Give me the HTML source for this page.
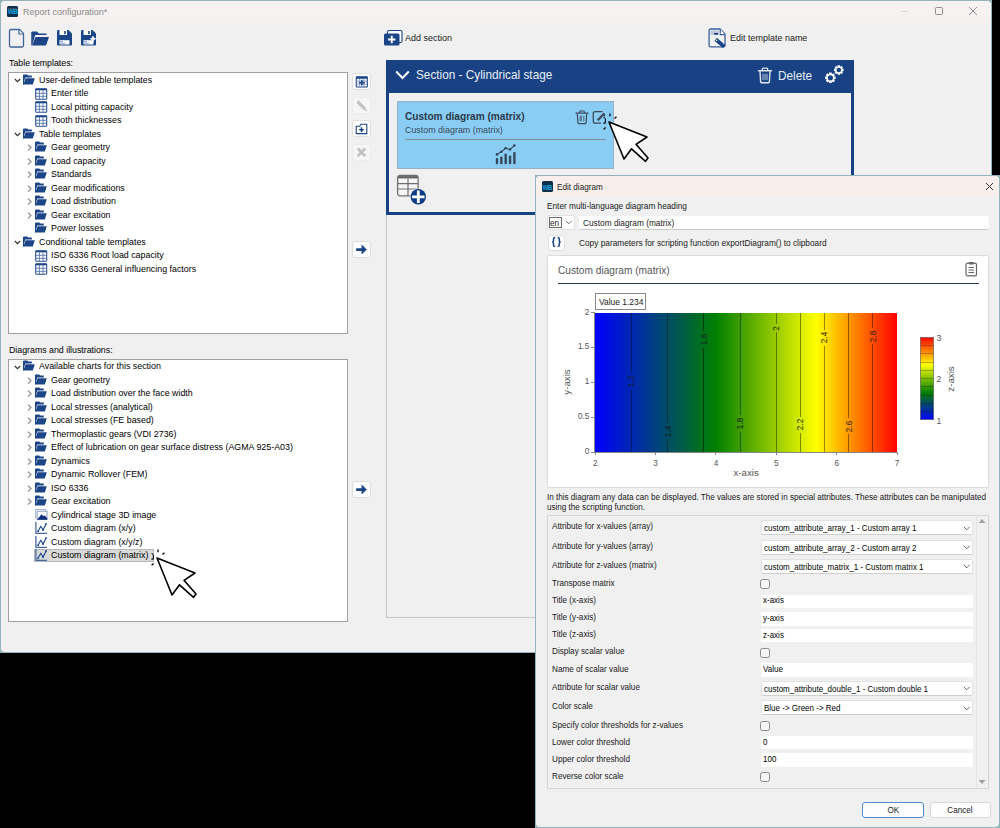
<!DOCTYPE html>
<html><head><meta charset="utf-8"><title>Report configuration</title>
<style>
html,body{margin:0;padding:0;width:1000px;height:828px;overflow:hidden;background:#000;}
.r{position:absolute;display:block;}
.t{position:absolute;white-space:nowrap;font-family:"Liberation Sans", sans-serif;line-height:1;}
</style></head><body>
<div class="r" style="left:0;top:0;width:992px;height:653px;background:#93b4b9"></div>
<div class="r" style="left:1px;top:1px;width:990px;height:651px;background:#f0f0f0;border-radius:4px;overflow:hidden"></div>
<div class="r" style="left:1px;top:1px;width:990px;height:22px;background:#f5f2f1;border-radius:4px 4px 0 0"></div>
<div class="r" style="left:7px;top:5.5px;width:11px;height:11px;background:#0f2f48;border-radius:1.5px"></div>
<div class="r" style="left:8px;top:7.5px;width:9px;height:1px;background:#3a4a5a"></div>
<div class="t " style="left:7.8px;top:8.84px;font-size:6.80px;color:#1aa3e0;font-weight:bold;letter-spacing:-0.9px">WB</div>
<div class="t " style="left:23px;top:7.12px;font-size:9.90px;color:#8a8a8a;transform:scaleX(0.9091);transform-origin:0 0;">Report configuration*</div>
<div class="r" style="left:901px;top:11px;width:7px;height:1px;background:#d8d8d8"></div>
<div class="r" style="left:935px;top:7px;width:7.5px;height:7.5px;border:1px solid #8c8c8c;box-sizing:border-box;border-radius:1.5px"></div>
<svg class="r" style="left:968px;top:6px;" width="10" height="10" viewBox="0 0 10 10"><path d="M1 1L9 9M9 1L1 9" stroke="#858585" stroke-width="0.9"/></svg>
<svg class="r" style="left:8px;top:28px;" width="17" height="20" viewBox="0 0 17 20"><path d="M1.5 3Q1.5 1.5 3 1.5H11.5L15.5 5.5V17.5Q15.5 19 14 19H3Q1.5 19 1.5 17.5Z" fill="#f0f0f0" stroke="#40649e" stroke-width="1.3" stroke-linejoin="round"/><path d="M11 1.8V6H15.2" fill="#fff" stroke="#40649e" stroke-width="1.2"/></svg>
<svg class="r" style="left:31px;top:30px;" width="19" height="17" viewBox="0 0 19 17"><path d="M1 1.5H6L7.8 3.5H15.5V5H4.2L1.2 15.5Z" fill="#1c4587"/><path d="M4.5 7H18L15 15.5H1.2Z" fill="#1c4587"/><path d="M0.8 2V15.5" stroke="#1c4587" stroke-width="1.1"/></svg>
<svg class="r" style="left:56px;top:29px;" width="17" height="18" viewBox="0 0 17 18"><path d="M1 2.2Q1 1 2.2 1H12.5L16 4.5V15.3Q16 16.5 14.8 16.5H2.2Q1 16.5 1 15.3Z" fill="#1c4587"/><rect x="3.5" y="1" width="7.5" height="5" fill="#fff"/><rect x="8.2" y="2" width="1.6" height="3.2" fill="#1c4587"/><rect x="3.5" y="11.2" width="10" height="4.3" fill="#fff"/><rect x="4.2" y="12.3" width="2.6" height="0.9" fill="#5a7ab0"/><rect x="4.2" y="13.8" width="5" height="0.9" fill="#8aa0c8"/></svg>
<svg class="r" style="left:80px;top:29px;" width="17" height="18" viewBox="0 0 17 18"><path d="M1 2.2Q1 1 2.2 1H12.5L16 4.5V15.3Q16 16.5 14.8 16.5H2.2Q1 16.5 1 15.3Z" fill="#1c4587"/><rect x="3.5" y="1" width="7.5" height="5" fill="#fff"/><rect x="8.2" y="2" width="1.6" height="3.2" fill="#1c4587"/><rect x="3.5" y="11.2" width="10" height="4.3" fill="#fff"/><rect x="4.2" y="12.3" width="2.6" height="0.9" fill="#5a7ab0"/><rect x="4.2" y="13.8" width="5" height="0.9" fill="#8aa0c8"/><path d="M13 7.2Q13.4 9.4 15.6 9.8Q13.4 10.2 13 12.4Q12.6 10.2 10.4 9.8Q12.6 9.4 13 7.2Z" fill="#fff" stroke="#fff" stroke-width="0.8"/></svg>
<div class="t " style="left:9px;top:57.81px;font-size:9.68px;color:#000;transform:scaleX(0.9091);transform-origin:0 0;">Table templates:</div>
<div class="t " style="left:9px;top:344.91px;font-size:9.68px;color:#000;transform:scaleX(0.9091);transform-origin:0 0;">Diagrams and illustrations:</div>
<div class="r" style="left:8px;top:72px;width:340px;height:262px;background:#fff;border:1px solid #a0a0a0;box-sizing:border-box"></div>
<div class="r" style="left:8px;top:359px;width:340px;height:263px;background:#fff;border:1px solid #a0a0a0;box-sizing:border-box"></div>
<div class="r" style="left:34px;top:549px;width:120px;height:13px;background:#d9d9d9;border:1px solid #b8b8b8;box-sizing:border-box"></div>
<svg class="r" style="left:13.5px;top:78.0px;" width="7" height="5" viewBox="0 0 7 5"><path d="M0.8 1L3.5 3.6L6.2 1" fill="none" stroke="#333" stroke-width="1.2"/></svg>
<svg class="r" style="left:23px;top:73.7px;" width="12" height="12" viewBox="0 0 12 12"><path d="M0.5 0.5H4.2L5.2 1.6H8.8V3.4H2.2L0.5 9.8Z" fill="#1c4587"/><path d="M2.6 4.2H11.8L9.8 10.6H0.4Z" fill="#1c4587"/><path d="M0.5 1V10.5" stroke="#1c4587" stroke-width="1"/></svg>
<div class="t " style="left:39px;top:74.76px;font-size:9.74px;color:#000;transform:scaleX(0.9091);transform-origin:0 0;">User-defined table templates</div>
<svg class="r" style="left:35px;top:87.5px;" width="13" height="12" viewBox="0 0 13 12"><rect x="0.7" y="0.7" width="11" height="10.6" fill="#fff" stroke="#2a5094" stroke-width="1.1" rx="0.8"/><rect x="0.7" y="0.7" width="11" height="1.6" fill="#1c4587"/><path d="M0.7 5.3H11.7M0.7 8.3H11.7M4.4 2V11.3M8 2V11.3" stroke="#5574aa" stroke-width="0.9"/></svg>
<div class="t " style="left:51px;top:88.26px;font-size:9.74px;color:#000;transform:scaleX(0.9091);transform-origin:0 0;">Enter title</div>
<svg class="r" style="left:35px;top:101.0px;" width="13" height="12" viewBox="0 0 13 12"><rect x="0.7" y="0.7" width="11" height="10.6" fill="#fff" stroke="#2a5094" stroke-width="1.1" rx="0.8"/><rect x="0.7" y="0.7" width="11" height="1.6" fill="#1c4587"/><path d="M0.7 5.3H11.7M0.7 8.3H11.7M4.4 2V11.3M8 2V11.3" stroke="#5574aa" stroke-width="0.9"/></svg>
<div class="t " style="left:51px;top:101.76px;font-size:9.74px;color:#000;transform:scaleX(0.9091);transform-origin:0 0;">Local pitting capacity</div>
<svg class="r" style="left:35px;top:114.5px;" width="13" height="12" viewBox="0 0 13 12"><rect x="0.7" y="0.7" width="11" height="10.6" fill="#fff" stroke="#2a5094" stroke-width="1.1" rx="0.8"/><rect x="0.7" y="0.7" width="11" height="1.6" fill="#1c4587"/><path d="M0.7 5.3H11.7M0.7 8.3H11.7M4.4 2V11.3M8 2V11.3" stroke="#5574aa" stroke-width="0.9"/></svg>
<div class="t " style="left:51px;top:115.26px;font-size:9.74px;color:#000;transform:scaleX(0.9091);transform-origin:0 0;">Tooth thicknesses</div>
<svg class="r" style="left:13.5px;top:132.0px;" width="7" height="5" viewBox="0 0 7 5"><path d="M0.8 1L3.5 3.6L6.2 1" fill="none" stroke="#333" stroke-width="1.2"/></svg>
<svg class="r" style="left:23px;top:127.7px;" width="12" height="12" viewBox="0 0 12 12"><path d="M0.5 0.5H4.2L5.2 1.6H8.8V3.4H2.2L0.5 9.8Z" fill="#1c4587"/><path d="M2.6 4.2H11.8L9.8 10.6H0.4Z" fill="#1c4587"/><path d="M0.5 1V10.5" stroke="#1c4587" stroke-width="1"/></svg>
<div class="t " style="left:39px;top:128.76px;font-size:9.74px;color:#000;transform:scaleX(0.9091);transform-origin:0 0;">Table templates</div>
<svg class="r" style="left:26.5px;top:144.3px;" width="5" height="8" viewBox="0 0 5 8"><path d="M1 0.6L4 3.6L1 6.6" fill="none" stroke="#8c8c8c" stroke-width="1.2"/></svg>
<svg class="r" style="left:35px;top:141.2px;" width="12" height="12" viewBox="0 0 12 12"><path d="M0.5 0.5H4.2L5.2 1.6H8.8V3.4H2.2L0.5 9.8Z" fill="#1c4587"/><path d="M2.6 4.2H11.8L9.8 10.6H0.4Z" fill="#1c4587"/><path d="M0.5 1V10.5" stroke="#1c4587" stroke-width="1"/></svg>
<div class="t " style="left:51px;top:142.26px;font-size:9.74px;color:#000;transform:scaleX(0.9091);transform-origin:0 0;">Gear geometry</div>
<svg class="r" style="left:26.5px;top:157.8px;" width="5" height="8" viewBox="0 0 5 8"><path d="M1 0.6L4 3.6L1 6.6" fill="none" stroke="#8c8c8c" stroke-width="1.2"/></svg>
<svg class="r" style="left:35px;top:154.7px;" width="12" height="12" viewBox="0 0 12 12"><path d="M0.5 0.5H4.2L5.2 1.6H8.8V3.4H2.2L0.5 9.8Z" fill="#1c4587"/><path d="M2.6 4.2H11.8L9.8 10.6H0.4Z" fill="#1c4587"/><path d="M0.5 1V10.5" stroke="#1c4587" stroke-width="1"/></svg>
<div class="t " style="left:51px;top:155.76px;font-size:9.74px;color:#000;transform:scaleX(0.9091);transform-origin:0 0;">Load capacity</div>
<svg class="r" style="left:26.5px;top:171.3px;" width="5" height="8" viewBox="0 0 5 8"><path d="M1 0.6L4 3.6L1 6.6" fill="none" stroke="#8c8c8c" stroke-width="1.2"/></svg>
<svg class="r" style="left:35px;top:168.2px;" width="12" height="12" viewBox="0 0 12 12"><path d="M0.5 0.5H4.2L5.2 1.6H8.8V3.4H2.2L0.5 9.8Z" fill="#1c4587"/><path d="M2.6 4.2H11.8L9.8 10.6H0.4Z" fill="#1c4587"/><path d="M0.5 1V10.5" stroke="#1c4587" stroke-width="1"/></svg>
<div class="t " style="left:51px;top:169.26px;font-size:9.74px;color:#000;transform:scaleX(0.9091);transform-origin:0 0;">Standards</div>
<svg class="r" style="left:26.5px;top:184.8px;" width="5" height="8" viewBox="0 0 5 8"><path d="M1 0.6L4 3.6L1 6.6" fill="none" stroke="#8c8c8c" stroke-width="1.2"/></svg>
<svg class="r" style="left:35px;top:181.7px;" width="12" height="12" viewBox="0 0 12 12"><path d="M0.5 0.5H4.2L5.2 1.6H8.8V3.4H2.2L0.5 9.8Z" fill="#1c4587"/><path d="M2.6 4.2H11.8L9.8 10.6H0.4Z" fill="#1c4587"/><path d="M0.5 1V10.5" stroke="#1c4587" stroke-width="1"/></svg>
<div class="t " style="left:51px;top:182.76px;font-size:9.74px;color:#000;transform:scaleX(0.9091);transform-origin:0 0;">Gear modifications</div>
<svg class="r" style="left:26.5px;top:198.3px;" width="5" height="8" viewBox="0 0 5 8"><path d="M1 0.6L4 3.6L1 6.6" fill="none" stroke="#8c8c8c" stroke-width="1.2"/></svg>
<svg class="r" style="left:35px;top:195.2px;" width="12" height="12" viewBox="0 0 12 12"><path d="M0.5 0.5H4.2L5.2 1.6H8.8V3.4H2.2L0.5 9.8Z" fill="#1c4587"/><path d="M2.6 4.2H11.8L9.8 10.6H0.4Z" fill="#1c4587"/><path d="M0.5 1V10.5" stroke="#1c4587" stroke-width="1"/></svg>
<div class="t " style="left:51px;top:196.26px;font-size:9.74px;color:#000;transform:scaleX(0.9091);transform-origin:0 0;">Load distribution</div>
<svg class="r" style="left:26.5px;top:211.8px;" width="5" height="8" viewBox="0 0 5 8"><path d="M1 0.6L4 3.6L1 6.6" fill="none" stroke="#8c8c8c" stroke-width="1.2"/></svg>
<svg class="r" style="left:35px;top:208.7px;" width="12" height="12" viewBox="0 0 12 12"><path d="M0.5 0.5H4.2L5.2 1.6H8.8V3.4H2.2L0.5 9.8Z" fill="#1c4587"/><path d="M2.6 4.2H11.8L9.8 10.6H0.4Z" fill="#1c4587"/><path d="M0.5 1V10.5" stroke="#1c4587" stroke-width="1"/></svg>
<div class="t " style="left:51px;top:209.76px;font-size:9.74px;color:#000;transform:scaleX(0.9091);transform-origin:0 0;">Gear excitation</div>
<svg class="r" style="left:35px;top:222.2px;" width="12" height="12" viewBox="0 0 12 12"><path d="M0.5 0.5H4.2L5.2 1.6H8.8V3.4H2.2L0.5 9.8Z" fill="#1c4587"/><path d="M2.6 4.2H11.8L9.8 10.6H0.4Z" fill="#1c4587"/><path d="M0.5 1V10.5" stroke="#1c4587" stroke-width="1"/></svg>
<div class="t " style="left:51px;top:223.26px;font-size:9.74px;color:#000;transform:scaleX(0.9091);transform-origin:0 0;">Power losses</div>
<svg class="r" style="left:13.5px;top:240.0px;" width="7" height="5" viewBox="0 0 7 5"><path d="M0.8 1L3.5 3.6L6.2 1" fill="none" stroke="#333" stroke-width="1.2"/></svg>
<svg class="r" style="left:23px;top:235.7px;" width="12" height="12" viewBox="0 0 12 12"><path d="M0.5 0.5H4.2L5.2 1.6H8.8V3.4H2.2L0.5 9.8Z" fill="#1c4587"/><path d="M2.6 4.2H11.8L9.8 10.6H0.4Z" fill="#1c4587"/><path d="M0.5 1V10.5" stroke="#1c4587" stroke-width="1"/></svg>
<div class="t " style="left:39px;top:236.76px;font-size:9.74px;color:#000;transform:scaleX(0.9091);transform-origin:0 0;">Conditional table templates</div>
<svg class="r" style="left:35px;top:249.5px;" width="13" height="12" viewBox="0 0 13 12"><rect x="0.7" y="0.7" width="11" height="10.6" fill="#fff" stroke="#2a5094" stroke-width="1.1" rx="0.8"/><rect x="0.7" y="0.7" width="11" height="1.6" fill="#1c4587"/><path d="M0.7 5.3H11.7M0.7 8.3H11.7M4.4 2V11.3M8 2V11.3" stroke="#5574aa" stroke-width="0.9"/></svg>
<div class="t " style="left:51px;top:250.26px;font-size:9.74px;color:#000;transform:scaleX(0.9091);transform-origin:0 0;">ISO 6336 Root load capacity</div>
<svg class="r" style="left:35px;top:263.0px;" width="13" height="12" viewBox="0 0 13 12"><rect x="0.7" y="0.7" width="11" height="10.6" fill="#fff" stroke="#2a5094" stroke-width="1.1" rx="0.8"/><rect x="0.7" y="0.7" width="11" height="1.6" fill="#1c4587"/><path d="M0.7 5.3H11.7M0.7 8.3H11.7M4.4 2V11.3M8 2V11.3" stroke="#5574aa" stroke-width="0.9"/></svg>
<div class="t " style="left:51px;top:263.76px;font-size:9.74px;color:#000;transform:scaleX(0.9091);transform-origin:0 0;">ISO 6336 General influencing factors</div>
<svg class="r" style="left:13.5px;top:364.5px;" width="7" height="5" viewBox="0 0 7 5"><path d="M0.8 1L3.5 3.6L6.2 1" fill="none" stroke="#333" stroke-width="1.2"/></svg>
<svg class="r" style="left:23px;top:360.2px;" width="12" height="12" viewBox="0 0 12 12"><path d="M0.5 0.5H4.2L5.2 1.6H8.8V3.4H2.2L0.5 9.8Z" fill="#1c4587"/><path d="M2.6 4.2H11.8L9.8 10.6H0.4Z" fill="#1c4587"/><path d="M0.5 1V10.5" stroke="#1c4587" stroke-width="1"/></svg>
<div class="t " style="left:39px;top:361.26px;font-size:9.74px;color:#000;transform:scaleX(0.9091);transform-origin:0 0;">Available charts for this section</div>
<svg class="r" style="left:26.5px;top:376.8px;" width="5" height="8" viewBox="0 0 5 8"><path d="M1 0.6L4 3.6L1 6.6" fill="none" stroke="#8c8c8c" stroke-width="1.2"/></svg>
<svg class="r" style="left:35px;top:373.7px;" width="12" height="12" viewBox="0 0 12 12"><path d="M0.5 0.5H4.2L5.2 1.6H8.8V3.4H2.2L0.5 9.8Z" fill="#1c4587"/><path d="M2.6 4.2H11.8L9.8 10.6H0.4Z" fill="#1c4587"/><path d="M0.5 1V10.5" stroke="#1c4587" stroke-width="1"/></svg>
<div class="t " style="left:51px;top:374.76px;font-size:9.74px;color:#000;transform:scaleX(0.9091);transform-origin:0 0;">Gear geometry</div>
<svg class="r" style="left:26.5px;top:390.3px;" width="5" height="8" viewBox="0 0 5 8"><path d="M1 0.6L4 3.6L1 6.6" fill="none" stroke="#8c8c8c" stroke-width="1.2"/></svg>
<svg class="r" style="left:35px;top:387.2px;" width="12" height="12" viewBox="0 0 12 12"><path d="M0.5 0.5H4.2L5.2 1.6H8.8V3.4H2.2L0.5 9.8Z" fill="#1c4587"/><path d="M2.6 4.2H11.8L9.8 10.6H0.4Z" fill="#1c4587"/><path d="M0.5 1V10.5" stroke="#1c4587" stroke-width="1"/></svg>
<div class="t " style="left:51px;top:388.26px;font-size:9.74px;color:#000;transform:scaleX(0.9091);transform-origin:0 0;">Load distribution over the face width</div>
<svg class="r" style="left:26.5px;top:403.8px;" width="5" height="8" viewBox="0 0 5 8"><path d="M1 0.6L4 3.6L1 6.6" fill="none" stroke="#8c8c8c" stroke-width="1.2"/></svg>
<svg class="r" style="left:35px;top:400.7px;" width="12" height="12" viewBox="0 0 12 12"><path d="M0.5 0.5H4.2L5.2 1.6H8.8V3.4H2.2L0.5 9.8Z" fill="#1c4587"/><path d="M2.6 4.2H11.8L9.8 10.6H0.4Z" fill="#1c4587"/><path d="M0.5 1V10.5" stroke="#1c4587" stroke-width="1"/></svg>
<div class="t " style="left:51px;top:401.76px;font-size:9.74px;color:#000;transform:scaleX(0.9091);transform-origin:0 0;">Local stresses (analytical)</div>
<svg class="r" style="left:26.5px;top:417.3px;" width="5" height="8" viewBox="0 0 5 8"><path d="M1 0.6L4 3.6L1 6.6" fill="none" stroke="#8c8c8c" stroke-width="1.2"/></svg>
<svg class="r" style="left:35px;top:414.2px;" width="12" height="12" viewBox="0 0 12 12"><path d="M0.5 0.5H4.2L5.2 1.6H8.8V3.4H2.2L0.5 9.8Z" fill="#1c4587"/><path d="M2.6 4.2H11.8L9.8 10.6H0.4Z" fill="#1c4587"/><path d="M0.5 1V10.5" stroke="#1c4587" stroke-width="1"/></svg>
<div class="t " style="left:51px;top:415.26px;font-size:9.74px;color:#000;transform:scaleX(0.9091);transform-origin:0 0;">Local stresses (FE based)</div>
<svg class="r" style="left:26.5px;top:430.8px;" width="5" height="8" viewBox="0 0 5 8"><path d="M1 0.6L4 3.6L1 6.6" fill="none" stroke="#8c8c8c" stroke-width="1.2"/></svg>
<svg class="r" style="left:35px;top:427.7px;" width="12" height="12" viewBox="0 0 12 12"><path d="M0.5 0.5H4.2L5.2 1.6H8.8V3.4H2.2L0.5 9.8Z" fill="#1c4587"/><path d="M2.6 4.2H11.8L9.8 10.6H0.4Z" fill="#1c4587"/><path d="M0.5 1V10.5" stroke="#1c4587" stroke-width="1"/></svg>
<div class="t " style="left:51px;top:428.76px;font-size:9.74px;color:#000;transform:scaleX(0.9091);transform-origin:0 0;">Thermoplastic gears (VDI 2736)</div>
<svg class="r" style="left:26.5px;top:444.3px;" width="5" height="8" viewBox="0 0 5 8"><path d="M1 0.6L4 3.6L1 6.6" fill="none" stroke="#8c8c8c" stroke-width="1.2"/></svg>
<svg class="r" style="left:35px;top:441.2px;" width="12" height="12" viewBox="0 0 12 12"><path d="M0.5 0.5H4.2L5.2 1.6H8.8V3.4H2.2L0.5 9.8Z" fill="#1c4587"/><path d="M2.6 4.2H11.8L9.8 10.6H0.4Z" fill="#1c4587"/><path d="M0.5 1V10.5" stroke="#1c4587" stroke-width="1"/></svg>
<div class="t " style="left:51px;top:442.26px;font-size:9.74px;color:#000;transform:scaleX(0.9091);transform-origin:0 0;">Effect of lubrication on gear surface distress (AGMA 925-A03)</div>
<svg class="r" style="left:26.5px;top:457.8px;" width="5" height="8" viewBox="0 0 5 8"><path d="M1 0.6L4 3.6L1 6.6" fill="none" stroke="#8c8c8c" stroke-width="1.2"/></svg>
<svg class="r" style="left:35px;top:454.7px;" width="12" height="12" viewBox="0 0 12 12"><path d="M0.5 0.5H4.2L5.2 1.6H8.8V3.4H2.2L0.5 9.8Z" fill="#1c4587"/><path d="M2.6 4.2H11.8L9.8 10.6H0.4Z" fill="#1c4587"/><path d="M0.5 1V10.5" stroke="#1c4587" stroke-width="1"/></svg>
<div class="t " style="left:51px;top:455.76px;font-size:9.74px;color:#000;transform:scaleX(0.9091);transform-origin:0 0;">Dynamics</div>
<svg class="r" style="left:26.5px;top:471.3px;" width="5" height="8" viewBox="0 0 5 8"><path d="M1 0.6L4 3.6L1 6.6" fill="none" stroke="#8c8c8c" stroke-width="1.2"/></svg>
<svg class="r" style="left:35px;top:468.2px;" width="12" height="12" viewBox="0 0 12 12"><path d="M0.5 0.5H4.2L5.2 1.6H8.8V3.4H2.2L0.5 9.8Z" fill="#1c4587"/><path d="M2.6 4.2H11.8L9.8 10.6H0.4Z" fill="#1c4587"/><path d="M0.5 1V10.5" stroke="#1c4587" stroke-width="1"/></svg>
<div class="t " style="left:51px;top:469.26px;font-size:9.74px;color:#000;transform:scaleX(0.9091);transform-origin:0 0;">Dynamic Rollover (FEM)</div>
<svg class="r" style="left:26.5px;top:484.8px;" width="5" height="8" viewBox="0 0 5 8"><path d="M1 0.6L4 3.6L1 6.6" fill="none" stroke="#8c8c8c" stroke-width="1.2"/></svg>
<svg class="r" style="left:35px;top:481.7px;" width="12" height="12" viewBox="0 0 12 12"><path d="M0.5 0.5H4.2L5.2 1.6H8.8V3.4H2.2L0.5 9.8Z" fill="#1c4587"/><path d="M2.6 4.2H11.8L9.8 10.6H0.4Z" fill="#1c4587"/><path d="M0.5 1V10.5" stroke="#1c4587" stroke-width="1"/></svg>
<div class="t " style="left:51px;top:482.76px;font-size:9.74px;color:#000;transform:scaleX(0.9091);transform-origin:0 0;">ISO 6336</div>
<svg class="r" style="left:26.5px;top:498.3px;" width="5" height="8" viewBox="0 0 5 8"><path d="M1 0.6L4 3.6L1 6.6" fill="none" stroke="#8c8c8c" stroke-width="1.2"/></svg>
<svg class="r" style="left:35px;top:495.2px;" width="12" height="12" viewBox="0 0 12 12"><path d="M0.5 0.5H4.2L5.2 1.6H8.8V3.4H2.2L0.5 9.8Z" fill="#1c4587"/><path d="M2.6 4.2H11.8L9.8 10.6H0.4Z" fill="#1c4587"/><path d="M0.5 1V10.5" stroke="#1c4587" stroke-width="1"/></svg>
<div class="t " style="left:51px;top:496.26px;font-size:9.74px;color:#000;transform:scaleX(0.9091);transform-origin:0 0;">Gear excitation</div>
<svg class="r" style="left:35px;top:508.8px;" width="13" height="11" viewBox="0 0 13 11"><rect x="0.5" y="0.5" width="10.2" height="8.2" fill="none" stroke="#a9b6cc" stroke-width="1"/><rect x="2.2" y="2.2" width="9.8" height="8.4" fill="#fff" stroke="#8a9cc0" stroke-width="1"/><path d="M2 10.8L6.5 5.2L8.3 7.2L9.4 6.2L12.2 9.2V10.8Z" fill="#0f2f78"/></svg>
<div class="t " style="left:51px;top:509.76px;font-size:9.74px;color:#000;transform:scaleX(0.9091);transform-origin:0 0;">Cylindrical stage 3D image</div>
<svg class="r" style="left:35px;top:522.0px;" width="12" height="12" viewBox="0 0 12 12"><path d="M0.9 0V11.3H12" fill="none" stroke="#4a6aa4" stroke-width="1.3"/><path d="M3 9.3L5.8 4.3L8 8L11 2.2" fill="none" stroke="#1c4587" stroke-width="1.15"/><circle cx="3" cy="9.3" r="0.9" fill="#1c4587"/><circle cx="8" cy="8" r="0.9" fill="#1c4587"/><circle cx="11" cy="2" r="0.9" fill="#1c4587"/></svg>
<div class="t " style="left:51px;top:523.26px;font-size:9.74px;color:#000;transform:scaleX(0.9091);transform-origin:0 0;">Custom diagram (x/y)</div>
<svg class="r" style="left:35px;top:535.5px;" width="12" height="12" viewBox="0 0 12 12"><path d="M0.9 0V11.3H12" fill="none" stroke="#4a6aa4" stroke-width="1.3"/><path d="M3 9.3L5.8 4.3L8 8L11 2.2" fill="none" stroke="#1c4587" stroke-width="1.15"/><circle cx="3" cy="9.3" r="0.9" fill="#1c4587"/><circle cx="8" cy="8" r="0.9" fill="#1c4587"/><circle cx="11" cy="2" r="0.9" fill="#1c4587"/></svg>
<div class="t " style="left:51px;top:536.76px;font-size:9.74px;color:#000;transform:scaleX(0.9091);transform-origin:0 0;">Custom diagram (x/y/z)</div>
<svg class="r" style="left:35px;top:549.0px;" width="12" height="12" viewBox="0 0 12 12"><path d="M0.9 0V11.3H12" fill="none" stroke="#4a6aa4" stroke-width="1.3"/><path d="M3 9.3L5.8 4.3L8 8L11 2.2" fill="none" stroke="#1c4587" stroke-width="1.15"/><circle cx="3" cy="9.3" r="0.9" fill="#1c4587"/><circle cx="8" cy="8" r="0.9" fill="#1c4587"/><circle cx="11" cy="2" r="0.9" fill="#1c4587"/></svg>
<div class="t " style="left:51px;top:550.26px;font-size:9.74px;color:#000;transform:scaleX(0.9091);transform-origin:0 0;">Custom diagram (matrix)</div>
<div class="r" style="left:352px;top:73px;width:19px;height:17px;background:#fdfdfd;border:1px solid #e0e0e0;box-sizing:border-box;border-radius:3px"></div>
<svg class="r" style="left:352px;top:73px;" width="19" height="17" viewBox="0 0 19 17"><rect x="4.3" y="3.8" width="11" height="10.2" rx="0.6" fill="#fff" stroke="#1c4587" stroke-width="1.1"/><rect x="4.3" y="3.8" width="11" height="2" fill="#1c4587"/><path d="M4.3 8.2H15.3M4.3 11.2H15.3M7.7 5.8V14M11.9 5.8V14" stroke="#6b86b8" stroke-width="0.8"/><path d="M9.8 6.8V12.6M6.9 9.7H12.7" stroke="#1c4587" stroke-width="1.5"/></svg>
<div class="r" style="left:352px;top:96.5px;width:19px;height:17px;background:#f6f6f6;border:1px solid #ececec;box-sizing:border-box;border-radius:3px"></div>
<svg class="r" style="left:352px;top:96.5px;" width="19" height="17" viewBox="0 0 19 17"><path d="M5.5 4.5L12.8 11.8" stroke="#c2c2c2" stroke-width="3.2"/><path d="M12.2 11.2L14.2 13.4" stroke="#c2c2c2" stroke-width="1.6" stroke-linecap="round"/></svg>
<div class="r" style="left:352px;top:120px;width:19px;height:17px;background:#fdfdfd;border:1px solid #e0e0e0;box-sizing:border-box;border-radius:3px"></div>
<svg class="r" style="left:352px;top:120px;" width="19" height="17" viewBox="0 0 19 17"><path d="M4.2 6.2H7.8L9 4.2H14.8V13.6H4.2Z" fill="#fff" stroke="#1c4587" stroke-width="1.1" stroke-linejoin="round"/><path d="M9.5 7.3V12M7.2 9.65H11.8" stroke="#1c4587" stroke-width="1.5"/></svg>
<div class="r" style="left:352px;top:143.5px;width:19px;height:17px;background:#f6f6f6;border:1px solid #ececec;box-sizing:border-box;border-radius:3px"></div>
<svg class="r" style="left:352px;top:143.5px;" width="19" height="17" viewBox="0 0 19 17"><path d="M5.8 4.5L13.2 12.2M13.2 4.5L5.8 12.2" stroke="#c2c2c2" stroke-width="2.6"/></svg>
<div class="r" style="left:352px;top:241px;width:19px;height:17px;background:#fdfdfd;border:1px solid #e0e0e0;box-sizing:border-box;border-radius:3px"></div>
<svg class="r" style="left:352px;top:241px;" width="19" height="17" viewBox="0 0 19 17"><path d="M4.2 7.2H9.6V3.6L14.8 8.6L9.6 13.6V10H4.2Z" fill="#1c4587"/></svg>
<div class="r" style="left:352px;top:481px;width:19px;height:17px;background:#fdfdfd;border:1px solid #e0e0e0;box-sizing:border-box;border-radius:3px"></div>
<svg class="r" style="left:352px;top:481px;" width="19" height="17" viewBox="0 0 19 17"><path d="M4.2 7.2H9.6V3.6L14.8 8.6L9.6 13.6V10H4.2Z" fill="#1c4587"/></svg>
<svg class="r" style="left:384px;top:30px;" width="19" height="16" viewBox="0 0 19 16"><rect x="3.5" y="0.5" width="14.5" height="12" rx="1.5" fill="#fff" stroke="#1c4587" stroke-width="1.1"/><rect x="0" y="3.5" width="15.5" height="12" rx="1.5" fill="#1c4587"/><path d="M7.75 5.8V13.2M4.05 9.5H11.45" stroke="#fff" stroke-width="1.9"/></svg>
<div class="t " style="left:405px;top:32.82px;font-size:9.90px;color:#1a1a1a;transform:scaleX(0.9091);transform-origin:0 0;">Add section</div>
<svg class="r" style="left:708px;top:28px;" width="18" height="20" viewBox="0 0 18 20"><path d="M2.6 1H12L17 6V17.4Q17 18.9 15.5 18.9H2.6Q1.1 18.9 1.1 17.4V2.5Q1.1 1 2.6 1Z" fill="#f4f4f4" stroke="#3a5f9e" stroke-width="1.3"/><path d="M12.2 1.2V6.6H16.8" fill="#fff" stroke="#3a5f9e" stroke-width="1.2"/><rect x="2.4" y="2.4" width="9.4" height="4.6" fill="#c0cadb"/><rect x="6.2" y="5" width="3.8" height="1.6" fill="#0a2a80"/><path d="M7.6 11.2L16.2 18.6" stroke="#1c4587" stroke-width="3.8"/><path d="M7.8 11.6L9.2 12.8" stroke="#fff" stroke-width="1.2"/></svg>
<div class="t " style="left:729.5px;top:32.82px;font-size:9.90px;color:#1a1a1a;transform:scaleX(0.9091);transform-origin:0 0;">Edit template name</div>
<div class="r" style="left:386px;top:60px;width:468px;height:558px;border:1.5px solid #c4c4c8;box-sizing:border-box;background:#f0f0f0"></div>
<div class="r" style="left:386px;top:60px;width:468px;height:155px;background:#184283"></div>
<div class="r" style="left:389px;top:93px;width:462px;height:119px;background:#f0f0f0"></div>
<svg class="r" style="left:395px;top:70px;" width="15" height="10" viewBox="0 0 15 10"><path d="M1.2 1.5L7.5 8L13.8 1.5" fill="none" stroke="#fff" stroke-width="2"/></svg>
<div class="t " style="left:416px;top:68.31px;font-size:12.98px;color:#e8eef8;transform:scaleX(0.9091);transform-origin:0 0;">Section - Cylindrical stage</div>
<svg class="r" style="left:757px;top:67px;" width="16" height="17" viewBox="0 0 16 17"><path d="M1.5 3.8H14.5" stroke="#dfe6f0" stroke-width="1.5" stroke-linecap="round"/><path d="M5.3 3.6V2.2Q5.3 1.2 6.3 1.2H9.7Q10.7 1.2 10.7 2.2V3.6" fill="none" stroke="#dfe6f0" stroke-width="1.3"/><path d="M3 4.2L3.6 14.6Q3.7 15.8 4.9 15.8H11.1Q12.3 15.8 12.4 14.6L13 4.2" fill="none" stroke="#dfe6f0" stroke-width="1.4"/><path d="M6 6.8V13.2M8 6.8V13.2M10 6.8V13.2" stroke="#c9d3e3" stroke-width="0.9"/></svg>
<div class="t " style="left:778px;top:68.51px;font-size:12.98px;color:#e8eef8;transform:scaleX(0.9091);transform-origin:0 0;">Delete</div>
<svg class="r" style="left:824px;top:64px;" width="21" height="21" viewBox="0 0 21 21"><path d="M10.15 12.42L11.65 12.54L11.65 15.06L10.15 15.18L10.03 15.47L11.00 16.62L9.22 18.40L8.07 17.43L7.78 17.55L7.66 19.05L5.14 19.05L5.02 17.55L4.73 17.43L3.58 18.40L1.80 16.62L2.77 15.47L2.65 15.18L1.15 15.06L1.15 12.54L2.65 12.42L2.77 12.13L1.80 10.98L3.58 9.20L4.73 10.17L5.02 10.05L5.14 8.55L7.66 8.55L7.78 10.05L8.07 10.17L9.22 9.20L11.00 10.98L10.03 12.13Z" fill="#fff"/><circle cx="6.4" cy="13.8" r="2.6" fill="#184283"/><path d="M18.18 4.75L19.56 4.86L19.56 7.14L18.18 7.25L18.07 7.51L18.98 8.56L17.36 10.18L16.31 9.27L16.05 9.38L15.94 10.76L13.66 10.76L13.55 9.38L13.29 9.27L12.24 10.18L10.62 8.56L11.53 7.51L11.42 7.25L10.04 7.14L10.04 4.86L11.42 4.75L11.53 4.49L10.62 3.44L12.24 1.82L13.29 2.73L13.55 2.62L13.66 1.24L15.94 1.24L16.05 2.62L16.31 2.73L17.36 1.82L18.98 3.44L18.07 4.49Z" fill="#fff"/><circle cx="14.8" cy="6.0" r="2.3" fill="#184283"/></svg>
<div class="r" style="left:397px;top:101px;width:217px;height:68px;background:#89cdf5;border:1px solid #9ab0c0;box-sizing:border-box"></div>
<div class="t " style="left:405px;top:110.80px;font-size:11.11px;color:#2b3a4a;transform:scaleX(0.9091);transform-origin:0 0;font-weight:bold">Custom diagram (matrix)</div>
<div class="t " style="left:405px;top:125.11px;font-size:9.79px;color:#3a4a58;transform:scaleX(0.9091);transform-origin:0 0;">Custom diagram (matrix)</div>
<div class="r" style="left:405px;top:139px;width:201px;height:1px;background:#7f8f9a"></div>
<svg class="r" style="left:575px;top:110px;" width="14" height="15" viewBox="0 0 14 15"><path d="M1 3.2H13" stroke="#3d4d5a" stroke-width="1.2" stroke-linecap="round"/><path d="M4.6 3V1.9Q4.6 1 5.5 1H8.5Q9.4 1 9.4 1.9V3" fill="none" stroke="#3d4d5a" stroke-width="1.1"/><path d="M2.3 3.6L2.9 12.6Q3 13.6 4 13.6H10Q11 13.6 11.1 12.6L11.7 3.6" fill="none" stroke="#3d4d5a" stroke-width="1.2"/><path d="M5.2 5.8V11.2M6.3 5.8V11.2M8.8 5.8V11.2" stroke="#4b5b6a" stroke-width="0.9"/></svg>
<svg class="r" style="left:592px;top:110px;" width="16" height="15" viewBox="0 0 16 15"><path d="M10.5 1.6H3.2Q1.3 1.6 1.3 3.5V11.2Q1.3 13.1 3.2 13.1H9" fill="none" stroke="#3d4d5a" stroke-width="1.3"/><path d="M12.4 3.6V6.5" stroke="#3d4d5a" stroke-width="1.3"/><path d="M5.5 10.5L12.3 3.5" stroke="#3d4d5a" stroke-width="2.4"/><path d="M5 11L6.2 9.8" stroke="#89cdf5" stroke-width="0.8"/></svg>
<svg class="r" style="left:495px;top:143px;" width="22" height="23" viewBox="0 0 22 23"><path d="M2 11.4L6.3 8.8L10.6 5.2L15 6.5L19.3 2.6" fill="none" stroke="#34495a" stroke-width="1.1"/><circle cx="2" cy="11.4" r="1.3" fill="#34495a"/><circle cx="6.3" cy="8.8" r="1.3" fill="#34495a"/><circle cx="10.6" cy="5.2" r="1.3" fill="#34495a"/><circle cx="15" cy="6.5" r="1.3" fill="#34495a"/><circle cx="19.3" cy="2.6" r="1.3" fill="#34495a"/><rect x="0.80" y="15" width="2.4" height="6.2" rx="1" fill="#34495a"/><rect x="5.15" y="13.5" width="2.4" height="7.7" rx="1" fill="#34495a"/><rect x="9.50" y="10.5" width="2.4" height="10.7" rx="1" fill="#34495a"/><rect x="13.85" y="12.5" width="2.4" height="8.7" rx="1" fill="#34495a"/><rect x="18.20" y="9" width="2.4" height="12.2" rx="1" fill="#34495a"/></svg>
<svg class="r" style="left:396px;top:174px;" width="33" height="32" viewBox="0 0 33 32"><rect x="1.6" y="1.5" width="20.5" height="20.3" rx="2.5" fill="#f6f6f6" stroke="#707070" stroke-width="1.3"/><rect x="1.6" y="1.5" width="20.5" height="3" rx="1.5" fill="#6a6a6a"/><path d="M1.6 9.7H22.1M1.6 15H22.1M12 4.5V21.8" stroke="#707070" stroke-width="1.2"/><circle cx="22.3" cy="22.8" r="8.4" fill="#f0f0f0"/><circle cx="22.3" cy="22.8" r="7.7" fill="#0f3c86"/><path d="M22.3 16.6V29M16.1 22.8H28.5" stroke="#fff" stroke-width="2.8"/></svg>
<svg class="r" style="left:606.7px;top:120px;" width="44" height="44" viewBox="0 0 44 44"><path d="M2 2L40 17L29 24.3L41 38L38.5 41.3L24.5 28.8L17 39Z" fill="#fff" stroke="#000" stroke-width="1.6" stroke-linejoin="round"/></svg>
<svg class="r" style="left:598.7px;top:112px;" width="20" height="20" viewBox="0 0 20 20"><path d="M11 1.5V4.3" stroke="#000" stroke-width="1.3"/><path d="M15.5 6.5L17.5 4.8" stroke="#000" stroke-width="1.3"/><path d="M4.6 17.2L6.6 15.5" stroke="#000" stroke-width="1.3"/><path d="M4.6 5.4L6.2 6.4M6.4 6.8V10.4M4.4 11.1H6.6" fill="none" stroke="#000" stroke-width="1.1"/></svg>
<svg class="r" style="left:154.7px;top:556.2px;" width="44" height="44" viewBox="0 0 44 44"><path d="M2 2L40 17L29 24.3L41 38L38.5 41.3L24.5 28.8L17 39Z" fill="#fff" stroke="#000" stroke-width="1.6" stroke-linejoin="round"/></svg>
<svg class="r" style="left:146.7px;top:548.2px;" width="20" height="20" viewBox="0 0 20 20"><path d="M11 1.5V4.3" stroke="#000" stroke-width="1.3"/><path d="M15.5 6.5L17.5 4.8" stroke="#000" stroke-width="1.3"/><path d="M4.6 17.2L6.6 15.5" stroke="#000" stroke-width="1.3"/><path d="M4.6 5.4L6.2 6.4M6.4 6.8V10.4M4.4 11.1H6.6" fill="none" stroke="#000" stroke-width="1.1"/></svg>
<div class="r" style="left:535px;top:175px;width:465px;height:653px;background:#93b4b9"></div>
<div class="r" style="left:536px;top:176px;width:463px;height:651px;background:#f0f0f0;border-radius:4px"></div>
<div class="r" style="left:536px;top:176px;width:463px;height:21px;background:#f8efed;border-radius:4px 4px 0 0"></div>
<div class="r" style="left:542px;top:181px;width:10.5px;height:10.5px;background:#0f2f48;border-radius:1.5px"></div>
<div class="t " style="left:542.6px;top:184.57px;font-size:6.30px;color:#1aa3e0;font-weight:bold;letter-spacing:-0.9px">WB</div>
<div class="t " style="left:556.5px;top:182.71px;font-size:8.97px;color:#222;transform:scaleX(0.9091);transform-origin:0 0;">Edit diagram</div>
<svg class="r" style="left:985px;top:182px;" width="9" height="9" viewBox="0 0 9 9"><path d="M1 1L8 8M8 1L1 8" stroke="#333" stroke-width="1"/></svg>
<div class="t " style="left:547px;top:201.82px;font-size:9.08px;color:#1a1a1a;transform:scaleX(0.9091);transform-origin:0 0;">Enter multi-language diagram heading</div>
<div class="r" style="left:547px;top:215px;width:28px;height:14.5px;background:#fff;border:1px solid #e0e0e0;box-sizing:border-box;border-radius:2px"></div>
<div class="r" style="left:549px;top:216.5px;width:12.5px;height:11.5px;border:1px solid #6a6a6a;box-sizing:border-box"></div>
<div class="t " style="left:549.8px;top:219.01px;font-size:8.97px;color:#1a1a1a;transform:scaleX(0.9091);transform-origin:0 0;">en</div>
<svg class="r" style="left:565px;top:220px;" width="8" height="5" viewBox="0 0 8 5"><path d="M0.8 0.8L3.8 3.8L6.8 0.8" fill="none" stroke="#666" stroke-width="0.9"/></svg>
<div class="r" style="left:579px;top:215.5px;width:409.5px;height:14px;background:#fff;border-bottom:1.2px solid #c8c8c8;box-sizing:border-box;border-radius:2px"></div>
<div class="t " style="left:583px;top:218.87px;font-size:9.13px;color:#1a1a1a;transform:scaleX(0.9091);transform-origin:0 0;">Custom diagram (matrix)</div>
<div class="r" style="left:548px;top:234.5px;width:16.5px;height:16px;background:#fdfdfd;border:1px solid #e0e0e0;box-sizing:border-box;border-radius:3px"></div>
<svg class="r" style="left:550px;top:236px;" width="13" height="12" viewBox="0 0 13 12"><path d="M5.2 1.6Q3.5 1.6 3.5 3V4.8Q3.5 6 2.2 6.1Q3.5 6.2 3.5 7.4V9.2Q3.5 10.6 5.2 10.6M7.6 1.6Q9.3 1.6 9.3 3V4.8Q9.3 6 10.6 6.1Q9.3 6.2 9.3 7.4V9.2Q9.3 10.6 7.6 10.6" fill="none" stroke="#1c4587" stroke-width="1.5"/></svg>
<div class="t " style="left:579px;top:238.57px;font-size:9.13px;color:#1a1a1a;transform:scaleX(0.9091);transform-origin:0 0;">Copy parameters for scripting function exportDiagram() to clipboard</div>
<div class="r" style="left:546.5px;top:254.5px;width:442.5px;height:233px;background:#fff;border:1px solid #dcdcdc;box-sizing:border-box;border-radius:2px"></div>
<div class="t " style="left:557.5px;top:264.75px;font-size:11.17px;color:#555;transform:scaleX(0.9091);transform-origin:0 0;">Custom diagram (matrix)</div>
<svg class="r" style="left:965px;top:261px;" width="13" height="16" viewBox="0 0 13 16"><rect x="1" y="2.2" width="10.5" height="12.6" rx="1.6" fill="none" stroke="#666" stroke-width="1.2"/><rect x="3.8" y="1" width="5" height="2.4" rx="0.8" fill="#666"/><path d="M3.5 6.5H9M3.5 9H9M3.5 11.5H9" stroke="#666" stroke-width="1"/></svg>
<div class="r" style="left:557.5px;top:282.5px;width:421px;height:1.8px;background:#1f3552"></div>
<div class="r" style="left:595.3px;top:312.5px;width:301.70000000000005px;height:139.5px;background:linear-gradient(to right, #0000ff 0%, #008000 40%, #ffff00 73.333%, #ff0000 100%)"></div>
<div class="r" style="left:631.0px;top:312.5px;width:1px;height:60.85px;background:rgba(0,0,0,0.42)"></div>
<div class="r" style="left:631.0px;top:389.65px;width:1px;height:62.35px;background:rgba(0,0,0,0.42)"></div>
<div class="t" style="left:623.35px;top:377.00px;width:16.3px;height:9px;line-height:9px;font-size:8.2px;color:#1a1a1a;text-align:center;transform:rotate(-90deg)">1.2</div>
<div class="r" style="left:667.21px;top:312.5px;width:1px;height:110.35px;background:rgba(0,0,0,0.42)"></div>
<div class="r" style="left:667.21px;top:439.15px;width:1px;height:12.85px;background:rgba(0,0,0,0.42)"></div>
<div class="t" style="left:659.56px;top:426.50px;width:16.3px;height:9px;line-height:9px;font-size:8.2px;color:#1a1a1a;text-align:center;transform:rotate(-90deg)">1.4</div>
<div class="r" style="left:703.41px;top:312.5px;width:1px;height:18.95px;background:rgba(0,0,0,0.42)"></div>
<div class="r" style="left:703.41px;top:347.75px;width:1px;height:104.25px;background:rgba(0,0,0,0.42)"></div>
<div class="t" style="left:695.76px;top:335.10px;width:16.3px;height:9px;line-height:9px;font-size:8.2px;color:#1a1a1a;text-align:center;transform:rotate(-90deg)">1.6</div>
<div class="r" style="left:739.62px;top:312.5px;width:1px;height:102.75px;background:rgba(0,0,0,0.42)"></div>
<div class="r" style="left:739.62px;top:431.55px;width:1px;height:20.45px;background:rgba(0,0,0,0.42)"></div>
<div class="t" style="left:731.97px;top:418.90px;width:16.3px;height:9px;line-height:9px;font-size:8.2px;color:#1a1a1a;text-align:center;transform:rotate(-90deg)">1.8</div>
<div class="r" style="left:775.82px;top:312.5px;width:1px;height:11.45px;background:rgba(0,0,0,0.42)"></div>
<div class="r" style="left:775.82px;top:332.05px;width:1px;height:119.95px;background:rgba(0,0,0,0.42)"></div>
<div class="t" style="left:772.27px;top:323.50px;width:8.1px;height:9px;line-height:9px;font-size:8.2px;color:#1a1a1a;text-align:center;transform:rotate(-90deg)">2</div>
<div class="r" style="left:799.96px;top:312.5px;width:1px;height:104.05px;background:rgba(0,0,0,0.42)"></div>
<div class="r" style="left:799.96px;top:432.85px;width:1px;height:19.15px;background:rgba(0,0,0,0.42)"></div>
<div class="t" style="left:792.31px;top:420.20px;width:16.3px;height:9px;line-height:9px;font-size:8.2px;color:#1a1a1a;text-align:center;transform:rotate(-90deg)">2.2</div>
<div class="r" style="left:824.09px;top:312.5px;width:1px;height:17.25px;background:rgba(0,0,0,0.42)"></div>
<div class="r" style="left:824.09px;top:346.05px;width:1px;height:105.95px;background:rgba(0,0,0,0.42)"></div>
<div class="t" style="left:816.44px;top:333.40px;width:16.3px;height:9px;line-height:9px;font-size:8.2px;color:#1a1a1a;text-align:center;transform:rotate(-90deg)">2.4</div>
<div class="r" style="left:848.23px;top:312.5px;width:1px;height:105.35px;background:rgba(0,0,0,0.42)"></div>
<div class="r" style="left:848.23px;top:434.15px;width:1px;height:17.85px;background:rgba(0,0,0,0.42)"></div>
<div class="t" style="left:840.58px;top:421.50px;width:16.3px;height:9px;line-height:9px;font-size:8.2px;color:#1a1a1a;text-align:center;transform:rotate(-90deg)">2.6</div>
<div class="r" style="left:872.36px;top:312.5px;width:1px;height:15.65px;background:rgba(0,0,0,0.42)"></div>
<div class="r" style="left:872.36px;top:344.45px;width:1px;height:107.55px;background:rgba(0,0,0,0.42)"></div>
<div class="t" style="left:864.71px;top:331.80px;width:16.3px;height:9px;line-height:9px;font-size:8.2px;color:#1a1a1a;text-align:center;transform:rotate(-90deg)">2.8</div>
<div class="r" style="left:594.8px;top:452px;width:1px;height:3px;background:#888"></div>
<div class="t" style="left:585.30px;top:459px;width:20px;text-align:center;font-size:8.2px;line-height:10px;color:#555">2</div>
<div class="r" style="left:655.14px;top:452px;width:1px;height:3px;background:#888"></div>
<div class="t" style="left:645.64px;top:459px;width:20px;text-align:center;font-size:8.2px;line-height:10px;color:#555">3</div>
<div class="r" style="left:715.48px;top:452px;width:1px;height:3px;background:#888"></div>
<div class="t" style="left:705.98px;top:459px;width:20px;text-align:center;font-size:8.2px;line-height:10px;color:#555">4</div>
<div class="r" style="left:775.82px;top:452px;width:1px;height:3px;background:#888"></div>
<div class="t" style="left:766.32px;top:459px;width:20px;text-align:center;font-size:8.2px;line-height:10px;color:#555">5</div>
<div class="r" style="left:836.16px;top:452px;width:1px;height:3px;background:#888"></div>
<div class="t" style="left:826.66px;top:459px;width:20px;text-align:center;font-size:8.2px;line-height:10px;color:#555">6</div>
<div class="r" style="left:896.5px;top:452px;width:1px;height:3px;background:#888"></div>
<div class="t" style="left:887.00px;top:459px;width:20px;text-align:center;font-size:8.2px;line-height:10px;color:#555">7</div>
<div class="r" style="left:595.3px;top:452px;width:301.70000000000005px;height:1px;background:#888"></div>
<div class="r" style="left:591.3px;top:451.5px;width:4px;height:1px;background:#888"></div>
<div class="t" style="left:555.30px;top:447.00px;width:34px;text-align:right;font-size:8.2px;line-height:10px;color:#555">0</div>
<div class="r" style="left:591.3px;top:416.62px;width:4px;height:1px;background:#888"></div>
<div class="t" style="left:555.30px;top:412.12px;width:34px;text-align:right;font-size:8.2px;line-height:10px;color:#555">0.5</div>
<div class="r" style="left:591.3px;top:381.75px;width:4px;height:1px;background:#888"></div>
<div class="t" style="left:555.30px;top:377.25px;width:34px;text-align:right;font-size:8.2px;line-height:10px;color:#555">1</div>
<div class="r" style="left:591.3px;top:346.88px;width:4px;height:1px;background:#888"></div>
<div class="t" style="left:555.30px;top:342.38px;width:34px;text-align:right;font-size:8.2px;line-height:10px;color:#555">1.5</div>
<div class="r" style="left:591.3px;top:312.0px;width:4px;height:1px;background:#888"></div>
<div class="t" style="left:555.30px;top:307.50px;width:34px;text-align:right;font-size:8.2px;line-height:10px;color:#555">2</div>
<div class="r" style="left:594.3px;top:312.5px;width:1px;height:139.5px;background:#888"></div>
<div class="t" style="left:733.5px;top:467px;font-size:9.7px;line-height:12px;color:#555">x-axis</div>
<div class="t" style="left:546.8px;top:376px;width:40px;text-align:center;font-size:9.7px;line-height:12px;color:#555;transform:rotate(-90deg)">y-axis</div>
<div class="r" style="left:595.3px;top:293.4px;width:50.5px;height:17px;background:#fff;border:1px solid #888;box-sizing:border-box"></div>
<div class="t " style="left:598.5px;top:298.43px;font-size:9.29px;color:#1a1a1a;transform:scaleX(0.9091);transform-origin:0 0;">Value 1.234</div>
<div class="r" style="left:920.3px;top:337.2px;width:13.9px;height:82.8px;background:linear-gradient(to bottom,#ff0000 0%,#ffff00 33.333%,#008000 66.667%,#0000ff 100%)"></div>
<div class="r" style="left:920.3px;top:344.98px;width:13.9px;height:1px;background:rgba(0,0,0,0.28)"></div>
<div class="r" style="left:920.3px;top:353.26px;width:13.9px;height:1px;background:rgba(0,0,0,0.28)"></div>
<div class="r" style="left:920.3px;top:361.54px;width:13.9px;height:1px;background:rgba(0,0,0,0.28)"></div>
<div class="r" style="left:920.3px;top:369.82px;width:13.9px;height:1px;background:rgba(0,0,0,0.28)"></div>
<div class="r" style="left:920.3px;top:378.1px;width:13.9px;height:1px;background:rgba(0,0,0,0.28)"></div>
<div class="r" style="left:920.3px;top:386.38px;width:13.9px;height:1px;background:rgba(0,0,0,0.28)"></div>
<div class="r" style="left:920.3px;top:394.66px;width:13.9px;height:1px;background:rgba(0,0,0,0.28)"></div>
<div class="r" style="left:920.3px;top:402.94px;width:13.9px;height:1px;background:rgba(0,0,0,0.28)"></div>
<div class="r" style="left:920.3px;top:411.22px;width:13.9px;height:1px;background:rgba(0,0,0,0.28)"></div>
<div class="r" style="left:920.3px;top:337.2px;width:13.9px;height:82.8px;border:1px solid rgba(120,120,120,0.8);box-sizing:border-box"></div>
<div class="t" style="left:936.5px;top:332.50px;font-size:8.6px;line-height:10px;color:#555">3</div>
<div class="t" style="left:936.5px;top:374.00px;font-size:8.6px;line-height:10px;color:#555">2</div>
<div class="t" style="left:936.5px;top:415.50px;font-size:8.6px;line-height:10px;color:#555">1</div>
<div class="t" style="left:930.5px;top:372.5px;width:40px;text-align:center;font-size:9.7px;line-height:12px;color:#555;transform:rotate(-90deg)">z-axis</div>
<div class="t " style="left:546.5px;top:492.86px;font-size:8.91px;color:#1a1a1a;transform:scaleX(0.9091);transform-origin:0 0;">In this diagram any data can be displayed. The values are stored in special attributes. These attributes can be manipulated</div>
<div class="t " style="left:546.5px;top:503.26px;font-size:8.91px;color:#1a1a1a;transform:scaleX(0.9091);transform-origin:0 0;">using the scripting function.</div>
<div class="r" style="left:546.5px;top:515px;width:442.5px;height:274px;border:1px solid #d6d6d6;box-sizing:border-box;background:#f0f0f0"></div>
<div class="r" style="left:976px;top:516px;width:1px;height:272px;background:#e4e4e4"></div>
<svg class="r" style="left:978px;top:518px;" width="8" height="6" viewBox="0 0 8 6"><path d="M0.5 5L4 1L7.5 5Z" fill="#a0a0a0"/></svg>
<svg class="r" style="left:978px;top:779px;" width="8" height="6" viewBox="0 0 8 6"><path d="M0.5 1L4 5L7.5 1Z" fill="#a0a0a0"/></svg>
<div class="t " style="left:551.8px;top:522.41px;font-size:8.97px;color:#1a1a1a;transform:scaleX(0.9091);transform-origin:0 0;">Attribute for x-values (array)</div>
<div class="t " style="left:551.8px;top:541.61px;font-size:8.97px;color:#1a1a1a;transform:scaleX(0.9091);transform-origin:0 0;">Attribute for y-values (array)</div>
<div class="t " style="left:551.8px;top:560.71px;font-size:8.97px;color:#1a1a1a;transform:scaleX(0.9091);transform-origin:0 0;">Attribute for z-values (matrix)</div>
<div class="t " style="left:551.8px;top:579.21px;font-size:8.97px;color:#1a1a1a;transform:scaleX(0.9091);transform-origin:0 0;">Transpose matrix</div>
<div class="t " style="left:551.8px;top:596.01px;font-size:8.97px;color:#1a1a1a;transform:scaleX(0.9091);transform-origin:0 0;">Title (x-axis)</div>
<div class="t " style="left:551.8px;top:612.91px;font-size:8.97px;color:#1a1a1a;transform:scaleX(0.9091);transform-origin:0 0;">Title (y-axis)</div>
<div class="t " style="left:551.8px;top:629.91px;font-size:8.97px;color:#1a1a1a;transform:scaleX(0.9091);transform-origin:0 0;">Title (z-axis)</div>
<div class="t " style="left:551.8px;top:647.11px;font-size:8.97px;color:#1a1a1a;transform:scaleX(0.9091);transform-origin:0 0;">Display scalar value</div>
<div class="t " style="left:551.8px;top:664.91px;font-size:8.97px;color:#1a1a1a;transform:scaleX(0.9091);transform-origin:0 0;">Name of scalar value</div>
<div class="t " style="left:551.8px;top:682.91px;font-size:8.97px;color:#1a1a1a;transform:scaleX(0.9091);transform-origin:0 0;">Attribute for scalar value</div>
<div class="t " style="left:551.8px;top:702.11px;font-size:8.97px;color:#1a1a1a;transform:scaleX(0.9091);transform-origin:0 0;">Color scale</div>
<div class="t " style="left:551.8px;top:720.61px;font-size:8.97px;color:#1a1a1a;transform:scaleX(0.9091);transform-origin:0 0;">Specify color thresholds for z-values</div>
<div class="t " style="left:551.8px;top:737.91px;font-size:8.97px;color:#1a1a1a;transform:scaleX(0.9091);transform-origin:0 0;">Lower color threshold</div>
<div class="t " style="left:551.8px;top:755.11px;font-size:8.97px;color:#1a1a1a;transform:scaleX(0.9091);transform-origin:0 0;">Upper color threshold</div>
<div class="t " style="left:551.8px;top:771.91px;font-size:8.97px;color:#1a1a1a;transform:scaleX(0.9091);transform-origin:0 0;">Reverse color scale</div>
<div class="r" style="left:760.5px;top:520px;width:212px;height:15px;background:#fff;border:1px solid #e2e2e2;border-bottom-color:#cfcfcf;box-sizing:border-box;border-radius:2px"></div>
<div class="t " style="left:763.8px;top:524.15px;font-size:8.80px;color:#000;transform:scaleX(0.9091);transform-origin:0 0;">custom_attribute_array_1 - Custom array 1</div>
<svg class="r" style="left:963px;top:525.5px;" width="8" height="5" viewBox="0 0 8 5"><path d="M0.8 0.8L3.8 3.8L6.8 0.8" fill="none" stroke="#555" stroke-width="0.9"/></svg>
<div class="r" style="left:760.5px;top:539.5px;width:212px;height:15.0px;background:#fff;border:1px solid #e2e2e2;border-bottom-color:#cfcfcf;box-sizing:border-box;border-radius:2px"></div>
<div class="t " style="left:763.8px;top:543.65px;font-size:8.80px;color:#000;transform:scaleX(0.9091);transform-origin:0 0;">custom_attribute_array_2 - Custom array 2</div>
<svg class="r" style="left:963px;top:545.0px;" width="8" height="5" viewBox="0 0 8 5"><path d="M0.8 0.8L3.8 3.8L6.8 0.8" fill="none" stroke="#555" stroke-width="0.9"/></svg>
<div class="r" style="left:760.5px;top:558.5px;width:212px;height:15.0px;background:#fff;border:1px solid #e2e2e2;border-bottom-color:#cfcfcf;box-sizing:border-box;border-radius:2px"></div>
<div class="t " style="left:763.8px;top:562.65px;font-size:8.80px;color:#000;transform:scaleX(0.9091);transform-origin:0 0;">custom_attribute_matrix_1 - Custom matrix 1</div>
<svg class="r" style="left:963px;top:564.0px;" width="8" height="5" viewBox="0 0 8 5"><path d="M0.8 0.8L3.8 3.8L6.8 0.8" fill="none" stroke="#555" stroke-width="0.9"/></svg>
<div class="r" style="left:760.2px;top:579.1px;width:9.8px;height:9.8px;background:#f6f6f6;border:1px solid #8a8a8a;box-sizing:border-box;border-radius:2.5px"></div>
<div class="r" style="left:760.5px;top:594.5px;width:212px;height:13.5px;background:#fff"></div>
<div class="t " style="left:763px;top:596.35px;font-size:8.80px;color:#000;transform:scaleX(0.9091);transform-origin:0 0;">x-axis</div>
<div class="r" style="left:760.5px;top:612px;width:212px;height:13.5px;background:#fff"></div>
<div class="t " style="left:763px;top:613.85px;font-size:8.80px;color:#000;transform:scaleX(0.9091);transform-origin:0 0;">y-axis</div>
<div class="r" style="left:760.5px;top:628.8px;width:212px;height:13.700000000000045px;background:#fff"></div>
<div class="t " style="left:763px;top:630.65px;font-size:8.80px;color:#000;transform:scaleX(0.9091);transform-origin:0 0;">z-axis</div>
<div class="r" style="left:760.2px;top:647.8000000000001px;width:9.8px;height:9.8px;background:#f6f6f6;border:1px solid #8a8a8a;box-sizing:border-box;border-radius:2.5px"></div>
<div class="r" style="left:760.5px;top:663.2px;width:212px;height:13.599999999999909px;background:#fff"></div>
<div class="t " style="left:763px;top:665.05px;font-size:8.80px;color:#000;transform:scaleX(0.9091);transform-origin:0 0;">Value</div>
<div class="r" style="left:760.5px;top:680.5px;width:212px;height:15.0px;background:#fff;border:1px solid #e2e2e2;border-bottom-color:#cfcfcf;box-sizing:border-box;border-radius:2px"></div>
<div class="t " style="left:763.8px;top:684.65px;font-size:8.80px;color:#000;transform:scaleX(0.9091);transform-origin:0 0;">custom_attribute_double_1 - Custom double 1</div>
<svg class="r" style="left:963px;top:686.0px;" width="8" height="5" viewBox="0 0 8 5"><path d="M0.8 0.8L3.8 3.8L6.8 0.8" fill="none" stroke="#555" stroke-width="0.9"/></svg>
<div class="r" style="left:760.5px;top:700px;width:212px;height:15px;background:#fff;border:1px solid #e2e2e2;border-bottom-color:#cfcfcf;box-sizing:border-box;border-radius:2px"></div>
<div class="t " style="left:763.8px;top:704.15px;font-size:8.80px;color:#000;transform:scaleX(0.9091);transform-origin:0 0;">Blue -&gt; Green -&gt; Red</div>
<svg class="r" style="left:963px;top:705.5px;" width="8" height="5" viewBox="0 0 8 5"><path d="M0.8 0.8L3.8 3.8L6.8 0.8" fill="none" stroke="#555" stroke-width="0.9"/></svg>
<div class="r" style="left:760.2px;top:720.8000000000001px;width:9.8px;height:9.8px;background:#f6f6f6;border:1px solid #8a8a8a;box-sizing:border-box;border-radius:2.5px"></div>
<div class="r" style="left:760.5px;top:736.2px;width:212px;height:13.299999999999955px;background:#fff"></div>
<div class="t " style="left:763px;top:738.05px;font-size:8.80px;color:#000;transform:scaleX(0.9091);transform-origin:0 0;">0</div>
<div class="r" style="left:760.5px;top:753.2px;width:212px;height:13.599999999999909px;background:#fff"></div>
<div class="t " style="left:763px;top:755.05px;font-size:8.80px;color:#000;transform:scaleX(0.9091);transform-origin:0 0;">100</div>
<div class="r" style="left:760.2px;top:772.1px;width:9.8px;height:9.8px;background:#f6f6f6;border:1px solid #8a8a8a;box-sizing:border-box;border-radius:2.5px"></div>
<div class="r" style="left:862px;top:802.2px;width:62px;height:15.6px;background:#fdfdfd;border:1px solid #4f8ccf;box-sizing:border-box;border-radius:3px"></div>
<div class="t" style="left:862.5px;top:803.5px;width:61.5px;text-align:center;font-size:8.15px;line-height:13px;color:#1a1a1a">OK</div>
<div class="r" style="left:929.5px;top:802.2px;width:61px;height:15.6px;background:#fdfdfd;border:1px solid #d8d8d8;box-sizing:border-box;border-radius:3px"></div>
<div class="t" style="left:929.5px;top:803.5px;width:61px;text-align:center;font-size:8.15px;line-height:13px;color:#1a1a1a">Cancel</div>
</body></html>
